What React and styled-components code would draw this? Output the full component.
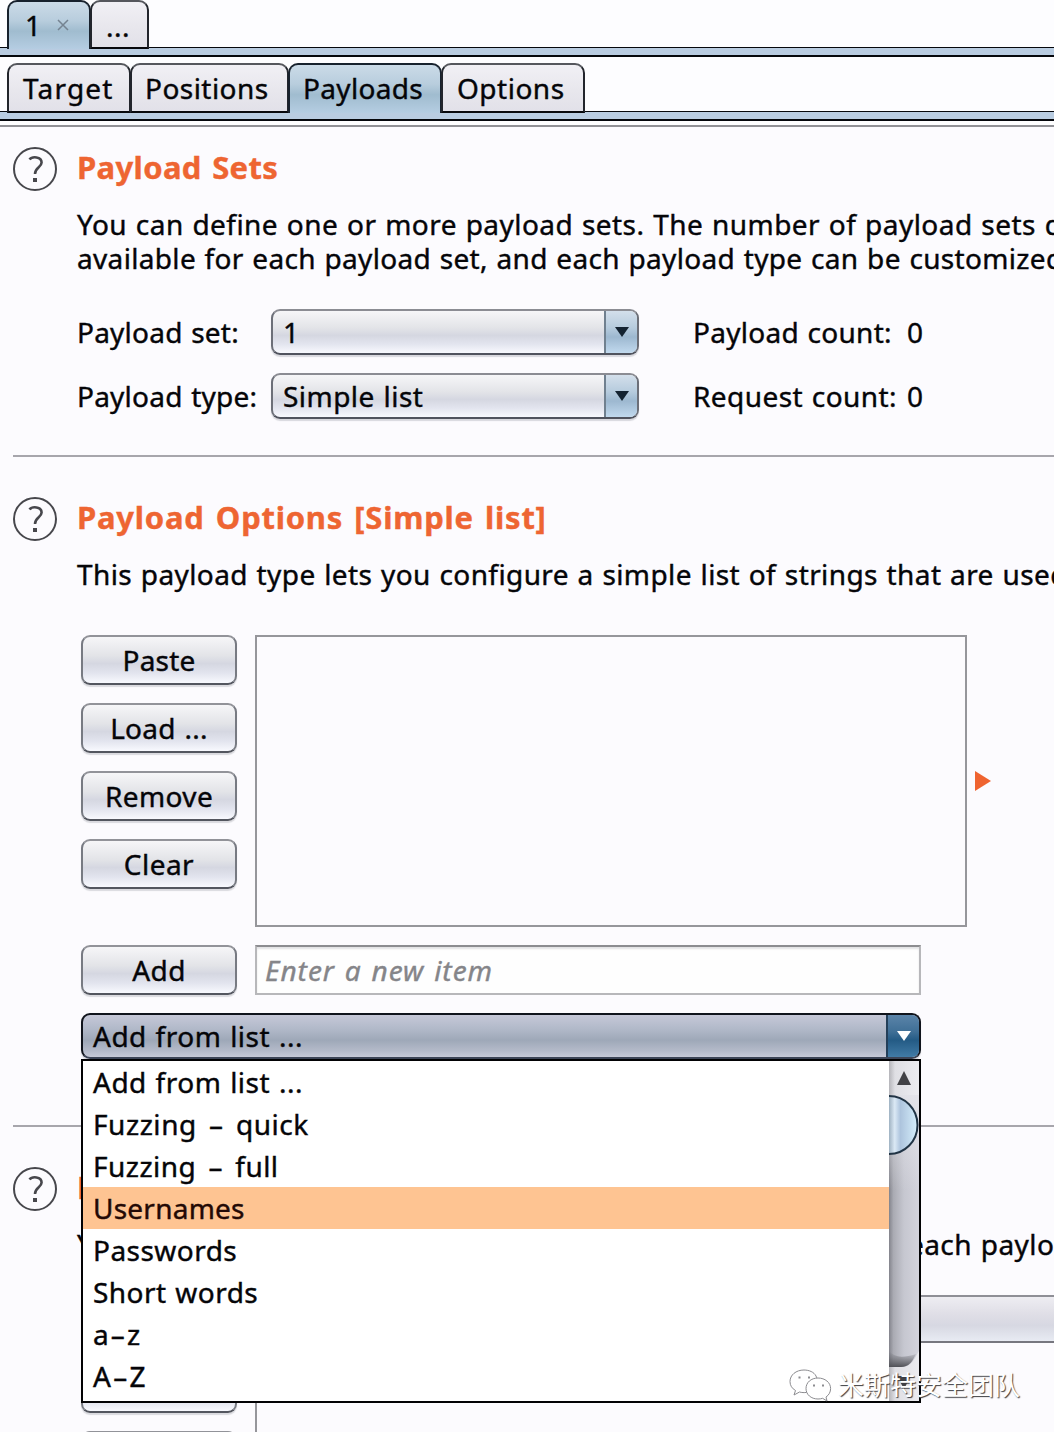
import React from 'react';
import styled, { createGlobalStyle, css } from 'styled-components';

const Global = createGlobalStyle`
  *, *::before, *::after { box-sizing: border-box; }
  html, body { margin: 0; padding: 0; overflow: hidden; background: #fcfbfe; }
`;

const chrome = 'linear-gradient(#f6f6f8, #e3e4e8 40%, #d5d7e1 58%, #e2e4ee 78%, #f8f9fe)';

const Screen = styled.div`
  width: 1054px;
  height: 1432px;
  overflow: hidden;
  position: relative;
  background: #fcfbfe;
  color: #050508;
  font-family: 'Noto Sans', 'Open Sans', sans-serif;
  font-size: 28px;
  line-height: 34px;
  white-space: nowrap;
`;

const T = styled.span`
  letter-spacing: ${p => p.$ls ?? 0.46}px;
  word-spacing: ${p => p.$ws ?? 1}px;
  -webkit-text-stroke: 0.4px currentColor;
`;

const TabRow = styled.div`
  display: flex;
  align-items: flex-start;
  height: ${p => p.$h}px;
  padding: ${p => p.$top}px 0 0 7px;
  background: linear-gradient(#05070c 0 1px, #b9cce1 1px) 0 100% / 100% 8px no-repeat, #fdfdff;
  border-bottom: 2px solid #05070c;
`;

const Tab = styled.div`
  width: ${p => p.$w}px;
  height: ${p => p.$h}px;
  display: flex;
  align-items: center;
  padding: ${p => p.$pad || '0 0 0 14px'};
  border: 2px solid #22252c;
  border-top-color: #55575d;
  border-bottom-color: #07080c;
  border-radius: 10px 10px 0 0;
  background: linear-gradient(#f1f0f5, #e8e7ed 55%, #e2e1e9);
  & + & { margin-left: -1px; }
  ${p => p.$active && css`
    border-color: #17212d;
    border-bottom: 0;
    background: linear-gradient(#cbdbe8, #b8cddd 40%, #a0bccf 62%, #b5cde2);
  `}
`;

const Close = styled.svg`
  width: 12px;
  height: 12px;
  margin: 0 0 0 16px;
`;

const Rule = styled.div`
  height: 2px;
  margin-left: ${p => p.$inset || 0}px;
  background: ${p => p.$c || '#a7a6ac'};
`;

const Gap = styled.div`
  height: ${p => p.$h}px;
  background: ${p => p.$c || 'transparent'};
`;

const Section = styled.section`
  display: flex;
  align-items: flex-start;
  height: ${p => p.$h}px;
  padding: 20px 0 0 13px;
`;

const HelpIcon = styled.svg`
  flex: none;
  width: 44px;
  height: 44px;
  margin-right: 20px;
`;

const Body = styled.div`
  flex: none;
  width: 1100px;
`;

const Title = styled.h2`
  margin: 0;
  height: 42px;
  font-size: 31px;
  line-height: 40px;
  font-weight: 700;
  color: #ee6532;
`;

const Desc = styled.p`
  margin: 18px 0 0;
`;

const Form = styled.div`
  display: grid;
  grid-template-columns: 194px 368px 268px auto;
  grid-auto-rows: 46px;
  row-gap: 18px;
  align-items: center;
  margin-top: 34px;
  > :nth-child(4n + 3) { padding-left: 54px; }
`;

const Combo = styled.div`
  display: flex;
  height: 46px;
  width: ${p => p.$w}px;
  border: 2px solid #6c6f78;
  border-top-color: #8b8c93;
  border-bottom-color: #50535e;
  border-radius: 9px;
  overflow: hidden;
  background: ${chrome};
  box-shadow: 0 2px 1px #d8d8de;
  ${p => p.$dark && css`
    border-color: #10141c;
    border-bottom-color: #3d4557;
    background: linear-gradient(#c6c8d8, #b0b8c8 35%, #9ea8b8 60%, #b4bac9 85%, #c7cad8);
  `}
`;

const ComboText = styled.div`
  flex: 1;
  display: flex;
  align-items: center;
  padding: 0 0 0 10px;
`;

const ComboArrow = styled.div`
  width: 33px;
  border-left: 2px solid ${p => (p.$dark ? '#233f59' : '#70808f')};
  display: flex;
  align-items: center;
  justify-content: center;
  background: ${p => (p.$dark
    ? 'linear-gradient(#5b84a9, #3f6f96 40%, #245b85 60%, #417ba6)'
    : 'linear-gradient(#d3dfeb, #b6cbdd 40%, #9db8d0 62%, #c1d9ee)')};
`;

const ListArea = styled.div`
  display: flex;
  margin: ${p => p.$top}px 0 0 4px;
`;

const Buttons = styled.div`
  display: flex;
  flex-direction: column;
  gap: 18px;
  width: 156px;
  margin-right: 18px;
`;

const Button = styled.div`
  width: 156px;
  height: 50px;
  flex: none;
  display: flex;
  align-items: center;
  justify-content: center;
  border: 2px solid #777a82;
  border-top-color: #929399;
  border-bottom-color: #53565f;
  border-radius: 9px;
  background: ${chrome};
  box-shadow: 0 2px 1px #dadadf;
`;

const ListBox = styled.div`
  width: 712px;
  height: 292px;
  border: 2px solid #96969b;
`;

const Marker = styled.svg`
  align-self: center;
  width: 16px;
  height: 20px;
  margin-left: 8px;
`;

const AddRow = styled.div`
  display: flex;
  gap: 18px;
  margin: 18px 0 18px 4px;
`;

const Input = styled.div`
  width: 666px;
  height: 50px;
  display: flex;
  align-items: center;
  padding: 0 0 0 8px;
  border: 2px solid #b7b7ba;
  border-top-color: #8c8c90;
  background: #fefefe;
  box-shadow: inset 0 2px 2px #e2e2e4;
  color: #858589;
  font-style: italic;
`;

const Picker = styled.div`
  position: relative;
  width: 840px;
  margin-left: 4px;
`;

const Popup = styled.div`
  position: absolute;
  z-index: 2;
  top: 46px;
  left: 0;
  width: 840px;
  height: 344px;
  display: flex;
  border: 2px solid #020204;
  background: #fff;
`;

const Items = styled.div`
  flex: 1;
`;

const Item = styled.div`
  height: 42px;
  padding-left: 10px;
  line-height: 43px;
  color: ${p => (p.$on ? '#230905' : '#050508')};
  background: ${p => (p.$on ? '#fec492' : 'transparent')};
`;

const Scroll = styled.svg`
  width: 30px;
  height: 340px;
`;

const Table = styled.div`
  flex: 1;
  height: 240px;
  border-left: 2px solid #96969b;
`;

const TableHead = styled.div`
  height: 48px;
  border-top: 2px solid #8f8f96;
  border-bottom: 2px solid #77777f;
  background: linear-gradient(#eeedf2, #dfdee6 40%, #d7d8e2 65%, #e8ebf3);
`;

const Watermark = styled.div`
  position: absolute;
  z-index: 3;
  left: 788px;
  top: 1364px;
  display: flex;
  align-items: center;
  gap: 6px;
  font-family: 'Noto Sans CJK SC', sans-serif;
  font-size: 26px;
  line-height: 40px;
  color: #fff;
  text-shadow: 1px 1px 1px #3c3c40;
`;

const WeChat = styled.svg`
  width: 44px;
  height: 36px;
  margin-top: 2px;
`;

function Help() {
  return (
    <HelpIcon viewBox="0 0 44 44" fill="none" stroke="#47474c">
      <circle cx="22" cy="22" r="21" strokeWidth="2" />
      <path d="M16.500 12.500C19 9.200 28.600 9.200 28.600 15.600C28.600 20.400 22 20.300 22 27" strokeWidth="2.600" />
      <path d="M20 33h4" strokeWidth="4" />
    </HelpIcon>
  );
}

function Select({ w, dark, ls, children }) {
  return (
    <Combo $w={w} $dark={dark}>
      <ComboText><T $ls={ls}>{children}</T></ComboText>
      <ComboArrow $dark={dark}>
        <svg width="14" height="10" viewBox="0 0 14 10">
          <path d="M0 0h14L7 10z" fill={dark ? '#fff' : '#142331'} />
        </svg>
      </ComboArrow>
    </Combo>
  );
}

function ScrollBar() {
  return (
    <Scroll viewBox="0 0 30 340">
      <defs>
        <linearGradient id="track">
          <stop offset="0" stopColor="#83848c" />
          <stop offset=".15" stopColor="#aaabb3" />
          <stop offset=".5" stopColor="#c6c7d0" />
          <stop offset="1" stopColor="#d3d3dc" />
        </linearGradient>
        <linearGradient id="cap">
          <stop offset="0" stopColor="#b5b5ba" />
          <stop offset=".2" stopColor="#dfdfe4" />
          <stop offset="1" stopColor="#ececf0" />
        </linearGradient>
        <linearGradient id="thumb">
          <stop offset="0" stopColor="#9fb2c2" />
          <stop offset=".2" stopColor="#dbe9f5" />
          <stop offset=".4" stopColor="#adc4dd" />
          <stop offset="1" stopColor="#d6effc" />
        </linearGradient>
        <linearGradient id="fade" x1="0" y1="0" x2="0" y2="1">
          <stop offset="0" stopColor="#e8e8ed" stopOpacity=".8" />
          <stop offset="1" stopColor="#e8e8ed" stopOpacity="0" />
        </linearGradient>
        <linearGradient id="foot" x1="0" y1="0" x2="0" y2="1">
          <stop offset="0" stopColor="#66676d" stopOpacity="0" />
          <stop offset="1" stopColor="#505157" />
        </linearGradient>
      </defs>
      <path d="M0 0h30v340H0z" fill="url(#cap)" />
      <path d="M0 34H30V290C25 298 23 306 12 306H0z" fill="url(#track)" />
      <path d="M0 34H30V130H0z" fill="url(#fade)" />
      <path d="M0 290C6 297 14 297 27 293C23 301 20 306 12 306H0z" fill="url(#foot)" />
      <path d="M0 35C16 35 28.500 48 28.500 64S16 93 0 93z" fill="url(#thumb)" />
      <path d="M0 35C16 35 28.500 48 28.500 64S16 93 0 93" fill="none" stroke="#213445" strokeWidth="2" />
      <path d="M15 10l7 14H8z" fill="#424246" />
      <path d="M15 328l7-13H8z" fill="#424246" />
    </Scroll>
  );
}

const choices = [
  { label: 'Add from list ...', ls: 0.5 },
  { label: 'Fuzzing – quick', ls: 0.55, ws: 4.5 },
  { label: 'Fuzzing – full', ls: 0.48, ws: 4.5 },
  { label: 'Usernames', ls: 0.23 },
  { label: 'Passwords' },
  { label: 'Short words' },
  { label: 'a–z', ls: 2.1 },
  { label: 'A–Z', ls: 2.3 },
];

export default function App() {
  return (
    <>
      <Global />
      <Screen>
        <TabRow $h={57} $top={0}>
          <Tab $active $w={84} $h={49} $pad="0 0 2px 16px">
            <T>1</T>
            <Close viewBox="0 0 12 12"><path d="M1 1l10 10M11 1L1 11" stroke="#758391" strokeWidth="1.500" /></Close>
          </Tab>
          <Tab $w={59} $h={49} $pad="2px 0 0 14px"><T>...</T></Tab>
        </TabRow>
        <TabRow $h={64} $top={6}>
          <Tab $w={124} $h={50}><T $ls={1.2}>Target</T></Tab>
          <Tab $w={159} $h={50} $pad="0 0 0 13px"><T>Positions</T></Tab>
          <Tab $w={154} $h={50} $active $pad="0 0 2px 13px"><T $ls={0.33}>Payloads</T></Tab>
          <Tab $w={144} $h={50} $pad="0 0 0 14px"><T $ls={0.5}>Options</T></Tab>
        </TabRow>
        <Gap $h={4} $c="#fefeff" />
        <Rule $c="#919196" />

        <Section $h={328}>
          <Help />
          <Body>
            <Title><T $ls={0.35} $ws={2}>Payload Sets</T></Title>
            <Desc>
              <T>You can define one or more payload sets. The number of payload sets depends on</T><br />
              <T $ls={0.33}>available for each payload set, and each payload type can be customized in</T>
            </Desc>
            <Form>
              <T $ls={0.23}>Payload set:</T><Select w={368}>1</Select><T $ls={0.28}>Payload count:</T><T>0</T>
              <T $ls={0.23}>Payload type:</T><Select w={368}>Simple list</Select><T $ls={0.43}>Request count:</T><T>0</T>
            </Form>
          </Body>
        </Section>
        <Rule $inset={13} />

        <Gap $h={20} />
        <Section $h={648}>
          <Help />
          <Body>
            <Title><T $ls={0.75} $ws={2.5}>Payload Options [Simple list]</T></Title>
            <Desc><T $ls={0.4}>This payload type lets you configure a simple list of strings that are used as payloads.</T></Desc>
            <ListArea $top={44}>
              <Buttons>
                <Button><T $ls={0.2}>Paste</T></Button>
                <Button><T $ls={0.3}>Load ...</T></Button>
                <Button><T $ls={0.4}>Remove</T></Button>
                <Button><T>Clear</T></Button>
              </Buttons>
              <ListBox />
              <Marker viewBox="0 0 16 20"><path d="M0 0l16 10L0 20z" fill="#ef6430" /></Marker>
            </ListArea>
            <AddRow>
              <Button><T>Add</T></Button>
              <Input><T $ls={1.0} $ws={1.5}>Enter a new item</T></Input>
            </AddRow>
            <Picker>
              <Select w={840} dark ls={0.5}>Add from list ...</Select>
              <Popup>
                <Items>
                  {choices.map((c, i) => (
                    <Item key={c.label} $on={i === 3}><T $ls={c.ls} $ws={c.ws}>{c.label}</T></Item>
                  ))}
                </Items>
                <ScrollBar />
              </Popup>
            </Picker>
          </Body>
        </Section>
        <Rule $inset={13} />

        <Gap $h={20} />
        <Section $h={400}>
          <Help />
          <Body>
            <Title><T $ls={0.35}>Payload Processing</T></Title>
            <Desc><T>You can define rules to perform various processing tasks on each payload before it is used.</T></Desc>
            <ListArea $top={34}>
              <Buttons>
                <Button><T>Add</T></Button>
                <Button />
                <Button />
              </Buttons>
              <Table><TableHead /></Table>
            </ListArea>
          </Body>
        </Section>

        <Watermark>
          <WeChat viewBox="0 0 44 36" fill="#fff" stroke="#8c8c90" strokeWidth="1">
            <path d="M16 3C8 3 2 8 2 14.500c0 4 2 7 5.500 9L6 28l5.500-3c2 .6 5 .8 7 .4C30 24 31 15 28 9C26 5 21 3 16 3z" />
            <path d="M30 11c-7 0-12 4.500-12 10.500S23 32 30 32c1.700 0 3.200-.2 4.600-.7L39 34l-1-4c3-2 4.600-5 4.600-8.500C42.600 15.500 37 11 30 11z" />
            <path d="M10.500 10.500h2M20 10.500h2M25 18.500h2M34 18.500h2" strokeWidth="2" />
          </WeChat>
          米斯特安全团队
        </Watermark>
      </Screen>
    </>
  );
}
